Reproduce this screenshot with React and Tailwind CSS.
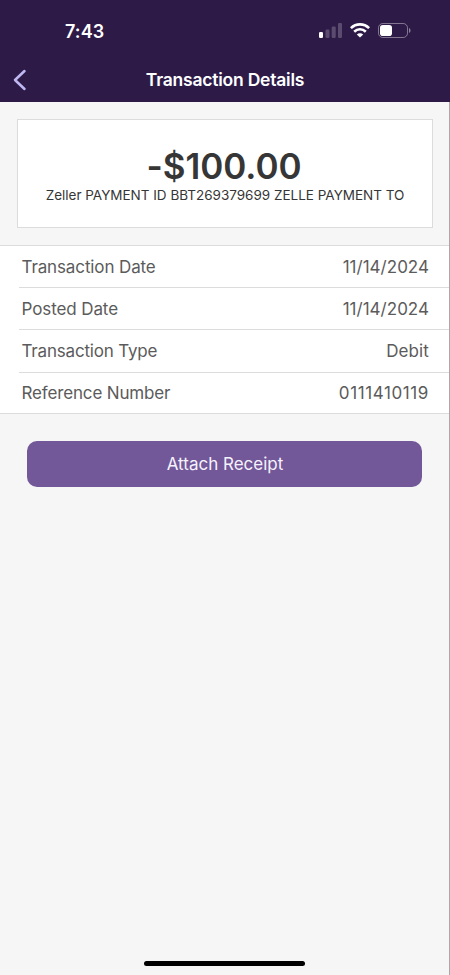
const details = [
  { label: 'Transaction Date', value: '11/14/2024', labelTracking: 'tracking-[-0.12px]', valueTracking: 'tracking-[0.02px]' },
  { label: 'Posted Date', value: '11/14/2024', labelTracking: 'tracking-[-0.1px]', valueTracking: 'tracking-[0.02px]' },
  { label: 'Transaction Type', value: 'Debit', labelTracking: 'tracking-[-0.18px]', valueTracking: 'tracking-[0.1px]' },
  { label: 'Reference Number', value: '0111410119', labelTracking: 'tracking-[-0.15px]', valueTracking: 'tracking-[0.6px]' },
];

function StatusIcons() {
  return (
    <div className="flex items-center">
      {/* Signal */}
      <svg width="23" height="15" viewBox="0 0 23 15" fill="#fff">
        <rect x="0" y="9" width="4" height="6" rx="1.2" />
        <rect x="6.5" y="6.5" width="4" height="8.5" rx="1.2" opacity="0.22" />
        <rect x="12.7" y="3.5" width="4" height="11.5" rx="1.2" opacity="0.22" />
        <rect x="19" y="0" width="4" height="15" rx="1.2" opacity="0.22" />
      </svg>
      {/* Wi-Fi */}
      <svg className="ml-2" width="20" height="15" viewBox="0 0 20 15" fill="none" stroke="#fff" strokeWidth="2.6">
        <path d="M0.9 5.1 C6 0.1 14 0.1 19.1 5.1" />
        <path d="M4.2 8.7 C7.5 5.5 12.5 5.5 15.8 8.7" />
        <path d="M10 14.6 L6.8 11.4 C8.6 9.8 11.4 9.8 13.2 11.4 Z" fill="#fff" stroke="none" />
      </svg>
      {/* Battery */}
      <svg className="ml-2" width="33" height="15" viewBox="0 0 33 15">
        <rect x="0.5" y="0.5" width="29" height="14" rx="4.3" fill="none" stroke="#fff" strokeOpacity="0.4" />
        <rect x="2" y="2" width="12" height="11" rx="2.8" fill="#fff" />
        <path d="M31 5 C33 5.8 33 9.2 31 10 Z" fill="#fff" fillOpacity="0.45" />
      </svg>
    </div>
  );
}

export default function App() {
  return (
    <div className="flex h-[975px] w-[450px] flex-col overflow-hidden bg-[#2e1a47] font-['Inter',sans-serif]">
      <header className="h-[102px] shrink-0 text-white">
        <div className="flex h-[61px] items-center justify-between pl-[65px] pr-[39px]">
          <span className="pt-[3px] text-[18px] font-semibold leading-none tracking-[0.1px]">7:43</span>
          <StatusIcons />
        </div>
        <div className="grid h-[37px] grid-cols-[1fr_auto_1fr] items-center">
          <svg className="ml-[13px]" width="14" height="22" viewBox="0 0 14 22" fill="none" stroke="#c0b8f2" strokeWidth="2.5" strokeLinecap="round" strokeLinejoin="round">
            <path d="M11.5 2 L2 11 L11.5 20" />
          </svg>
          <h1 className="text-[17.5px] font-semibold leading-none tracking-[-0.22px]">Transaction Details</h1>
        </div>
      </header>

      <main className="flex flex-1 flex-col border-r border-[#a9a9ab] bg-[#f6f6f6]">
        <section className="ml-[17px] mr-4 mt-[17px] flex h-[109px] flex-col items-center border border-[#dcdcdc] bg-white text-[#363636]">
          <p className="mt-[28px] pr-[2px] text-[35px] font-semibold leading-9 tracking-[-0.05px] [font-feature-settings:'calt'_0]">-$100.00</p>
          <p className="mt-px whitespace-nowrap text-[13.5px] leading-5 tracking-[-0.01px]">
            Zeller PAYMENT ID BBT269379699 ZELLE PAYMENT TO
          </p>
        </section>

        <dl className="mt-[17px] h-[169px] border-y border-[#dcdcdc] bg-white pl-[19px] text-[17px] text-[#5b5b5b]">
          {details.map((d) => (
            <div key={d.label} className="flex h-[42.2px] items-center justify-between border-b border-[#dcdcdc] pl-[2.5px] pr-5 pt-[1.5px] last:border-b-0 last:pt-0">
              <dt className={d.labelTracking}>{d.label}</dt>
              <dd className={d.valueTracking}>{d.value}</dd>
            </div>
          ))}
        </dl>

        <button className="mx-[27px] mt-[27px] h-[46px] shrink-0 rounded-[10px] bg-[#725799] pl-px pt-[2px] text-[17px] text-[#f6f2fb]">
          Attach Receipt
        </button>

        <div className="mb-[9px] ml-[144px] mt-auto h-[5px] w-[161px] rounded-full bg-black" />
      </main>
    </div>
  );
}
